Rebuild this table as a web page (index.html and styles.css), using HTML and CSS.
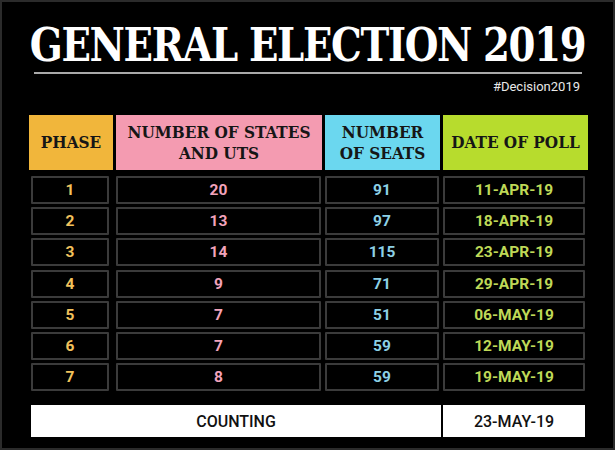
FILE: index.html
```html
<!DOCTYPE html>
<html lang="en">
<head>
<meta charset="utf-8">
<title>General Election 2019</title>
<link rel="stylesheet" href="styles.css">
</head>
<body>
<div class="page">
  <h1 class="title">GENERAL ELECTION 2019</h1>
  <div class="rule"></div>
  <div class="tag">#Decision2019</div>

  <div class="head">
    <div class="hcell h-phase">PHASE</div>
    <div class="hcell h-states">NUMBER OF STATES<br>AND UTS</div>
    <div class="hcell h-seats">NUMBER<br>OF SEATS</div>
    <div class="hcell h-date">DATE OF POLL</div>
  </div>

  <div class="rows">
    <div class="row"><div class="cell phase">1</div><div class="cell states">20</div><div class="cell seats">91</div><div class="cell date">11-APR-19</div></div>
    <div class="row"><div class="cell phase">2</div><div class="cell states">13</div><div class="cell seats">97</div><div class="cell date">18-APR-19</div></div>
    <div class="row"><div class="cell phase">3</div><div class="cell states">14</div><div class="cell seats">115</div><div class="cell date">23-APR-19</div></div>
    <div class="row"><div class="cell phase">4</div><div class="cell states">9</div><div class="cell seats">71</div><div class="cell date">29-APR-19</div></div>
    <div class="row"><div class="cell phase">5</div><div class="cell states">7</div><div class="cell seats">51</div><div class="cell date">06-MAY-19</div></div>
    <div class="row"><div class="cell phase">6</div><div class="cell states">7</div><div class="cell seats">59</div><div class="cell date">12-MAY-19</div></div>
    <div class="row"><div class="cell phase">7</div><div class="cell states">8</div><div class="cell seats">59</div><div class="cell date">19-MAY-19</div></div>
  </div>

  <div class="counting">
    <div class="ccell">COUNTING</div>
    <div class="ccell">23-MAY-19</div>
  </div>
</div>
</body>
</html>
```

FILE: styles.css
```css
* { box-sizing: border-box; }
html, body { margin: 0; padding: 0; background: #000; }
.page {
  width: 615px;
  height: 450px;
  border: 2px solid #2b2b2b;
  background: #000;
  display: flex;
  flex-direction: column;
  overflow: hidden;
}
.title {
  margin: 16px 0 0 0;
  font-family: "DejaVu Serif", serif;
  font-stretch: condensed;
  font-weight: bold;
  font-size: 47px;
  line-height: 54px;
  color: #fff;
  text-align: center;
  letter-spacing: -1.5px;
  white-space: nowrap;
  transform: scaleX(0.915);
}
.rule {
  margin: 0 31px 0 32px;
  height: 2px;
  background: #a9a9a9;
}
.tag {
  align-self: flex-end;
  margin: 5px 33px 0 0;
  font-family: Roboto, "Liberation Sans", sans-serif;
  font-size: 13px;
  line-height: 16px;
  color: #e8e8e8;
}
.head {
  margin: 20px 0 0 27px;
  display: grid;
  grid-template-columns: 84px 206px 115px 145px;
  column-gap: 3px;
  height: 55px;
}
.hcell {
  display: flex;
  align-items: center;
  justify-content: center;
  text-align: center;
  font-family: "DejaVu Serif", serif;
  font-stretch: condensed;
  font-weight: bold;
  font-size: 17px;
  line-height: 21px;
  color: #161616;
}
.h-phase { background: #f1b63b; }
.h-states { background: #f49bb1; }
.h-seats { background: #6bd7ef; }
.h-date { background: #b7dc2d; }

.rows {
  margin: 6px 0 0 29px;
  display: flex;
  flex-direction: column;
  gap: 3.2px;
}
.row {
  display: grid;
  grid-template-columns: 81px 205px 114px 142px;
  column-gap: 4px;
  height: 28px;
}
.cell {
  border: 2px solid #3b3b3b;
  border-radius: 1px;
  display: flex;
  align-items: center;
  justify-content: center;
  font-family: Roboto, "Liberation Sans", sans-serif;
  font-weight: bold;
  font-size: 15.5px;
}
.cell.phase { margin-right: 3px; color: #f2c25c; }
.cell.states { color: #f2a3bb; }
.cell.seats { color: #8dd1e6; }
.cell.date { color: #bfd957; }

.counting {
  margin: 14px 0 0 29px;
  display: grid;
  grid-template-columns: 410px 142px;
  column-gap: 2px;
  height: 32px;
}
.ccell {
  background: #fff;
  display: flex;
  align-items: center;
  justify-content: center;
  font-family: Roboto, "Liberation Sans", sans-serif;
  font-weight: 500;
  font-size: 16px;
  color: #111;
}
```
